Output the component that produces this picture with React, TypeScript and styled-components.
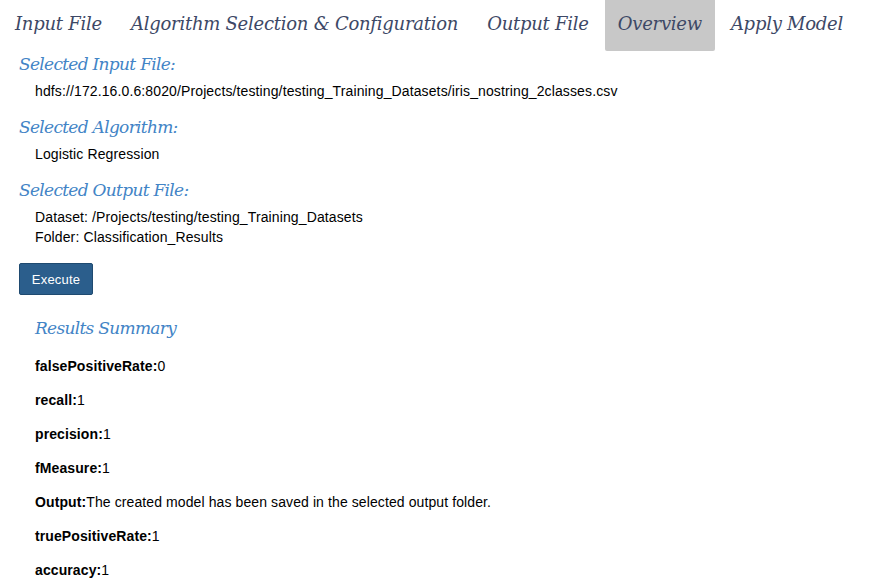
import React from "react";
import styled, { createGlobalStyle } from "styled-components";

const Global = createGlobalStyle`
  html, body { margin: 0; padding: 0; background: #fff; }
  body { font-family: "Liberation Sans", Arial, sans-serif; font-size: 14px; color: #000; }
`;

const Page = styled.div`
  width: 872px;
  height: 585px;
  overflow: hidden;
`;

const TabBar = styled.nav`
  display: flex;
  height: 51px;
  padding-left: 2px;
`;

const Tab = styled.div<{ $active?: boolean }>`
  display: flex;
  align-items: center;
  padding: 0 13px 4px;
  margin-right: 3px;
  font-family: "DejaVu Serif", Georgia, serif;
  font-style: italic;
  font-size: 18px;
  color: #3d4866;
  background: ${(p) => (p.$active ? "#c8c8c8" : "transparent")};
  border-radius: 0 0 2px 2px;
  letter-spacing: -0.25px;
`;

const Content = styled.div`
  padding: 0 19px;
`;

const Heading = styled.h3`
  margin: 0;
  font-family: "DejaVu Serif", Georgia, serif;
  font-style: italic;
  font-weight: normal;
  font-size: 17px;
  line-height: 26px;
  color: #4284c6;
  letter-spacing: -0.7px;
`;

const Section = styled.section`
  margin-bottom: 13px;
`;

const Value = styled.div`
  padding-left: 16px;
  line-height: 20px;
  margin-top: 4px;
  color: #000;
  letter-spacing: 0.12px;
`;

const Button = styled.button`
  display: block;
  margin-top: 16px;
  height: 32px;
  width: 74px;
  border: 1px solid #1f4a70;
  border-radius: 2px;
  background: #2b5e8c;
  color: #fff;
  font-family: "Liberation Sans", Arial, sans-serif;
  font-size: 13px;
  letter-spacing: 0.2px;
`;

const Results = styled.div`
  padding-left: 16px;
  margin-top: 20px;
`;

const ResultList = styled.div`
  display: flex;
  flex-direction: column;
  gap: 18px;
  margin-top: 17px;
`;

const ResultRow = styled.div`
  line-height: 16px;
  letter-spacing: 0.1px;
  b { font-weight: bold; }
`;

const results: [string, string][] = [
  ["falsePositiveRate", "0"],
  ["recall", "1"],
  ["precision", "1"],
  ["fMeasure", "1"],
  ["Output", "The created model has been saved in the selected output folder."],
  ["truePositiveRate", "1"],
  ["accuracy", "1"],
];

export default function App() {
  return (
    <Page>
      <Global />
      <TabBar>
        <Tab>Input File</Tab>
        <Tab>Algorithm Selection &amp; Configuration</Tab>
        <Tab>Output File</Tab>
        <Tab $active>Overview</Tab>
        <Tab>Apply Model</Tab>
      </TabBar>
      <Content>
        <Section>
          <Heading>Selected Input File:</Heading>
          <Value>hdfs://172.16.0.6:8020/Projects/testing/testing_Training_Datasets/iris_nostring_2classes.csv</Value>
        </Section>
        <Section>
          <Heading>Selected Algorithm:</Heading>
          <Value>Logistic Regression</Value>
        </Section>
        <Section>
          <Heading>Selected Output File:</Heading>
          <Value>
            Dataset: /Projects/testing/testing_Training_Datasets
            <br />
            Folder: Classification_Results
          </Value>
        </Section>
        <Button>Execute</Button>
        <Results>
          <Heading>Results Summary</Heading>
          <ResultList>
            {results.map(([k, v]) => (
              <ResultRow key={k}>
                <b>{k}:</b>
                {v}
              </ResultRow>
            ))}
          </ResultList>
        </Results>
      </Content>
    </Page>
  );
}
